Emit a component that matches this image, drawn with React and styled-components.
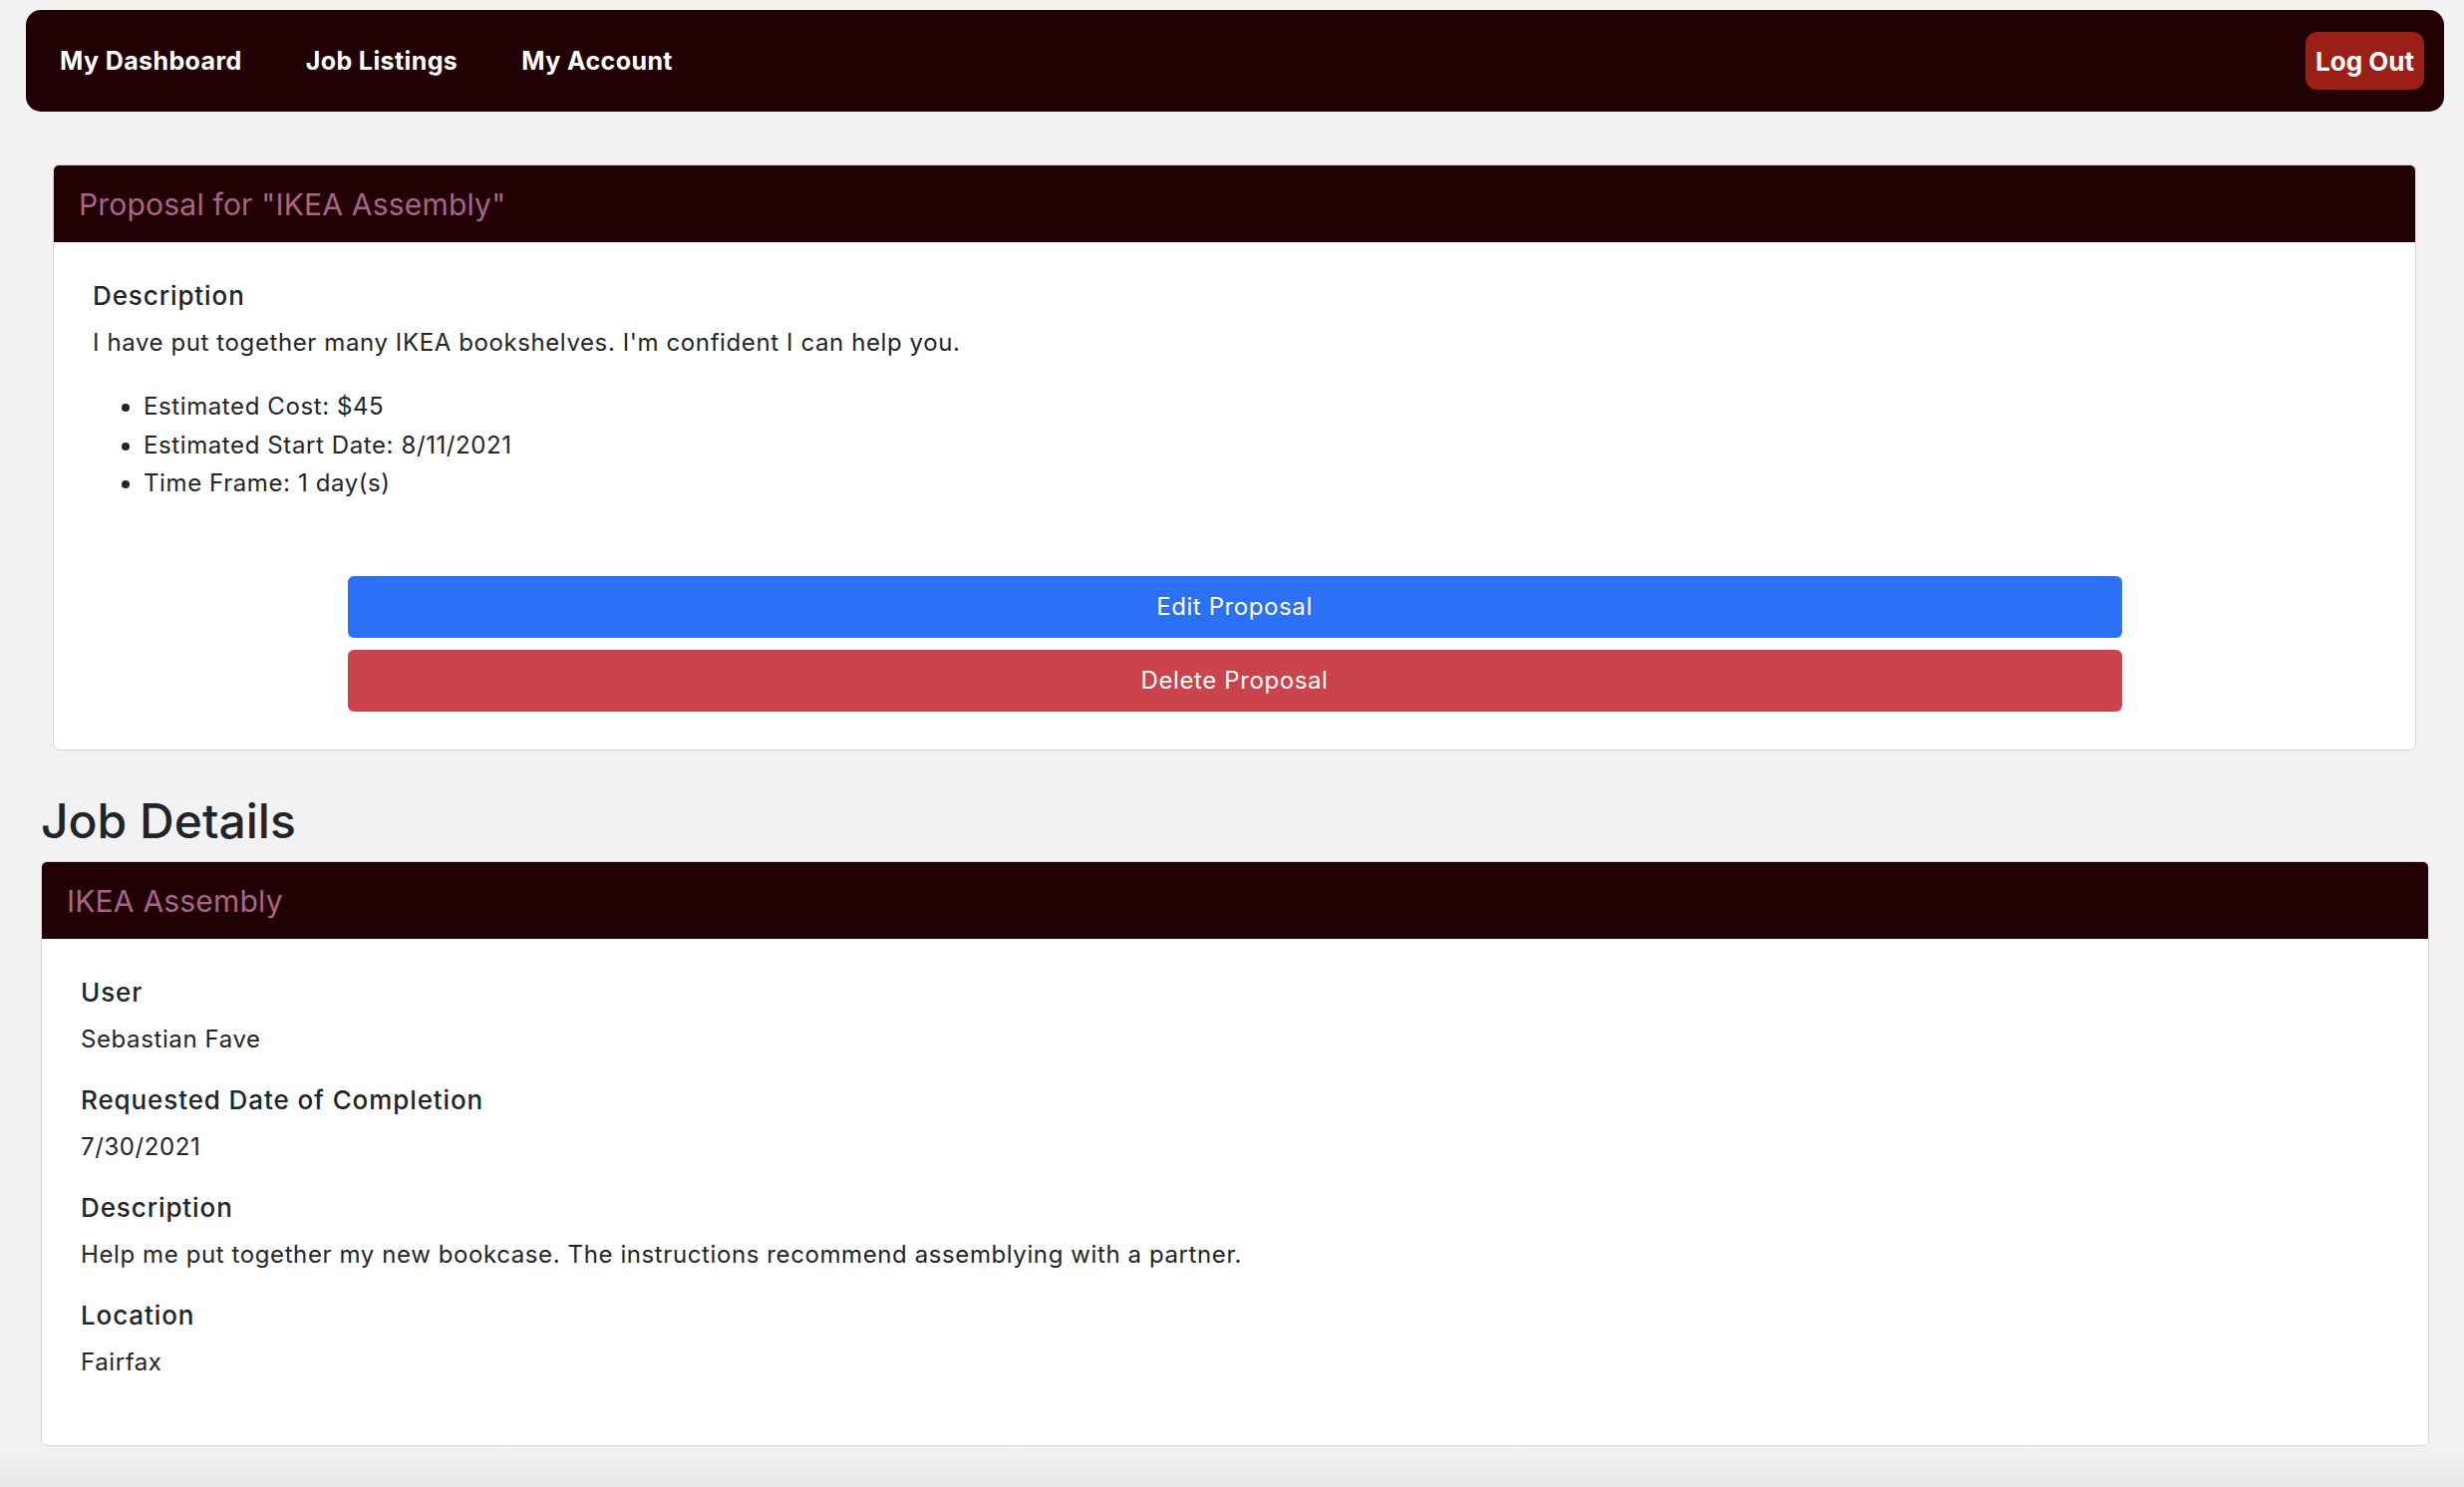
import styled, { createGlobalStyle } from "styled-components"

const GlobalStyle = createGlobalStyle`
html {
  height: 100%;
}
body {
  margin: 0;
  min-height: 100%;
  background: linear-gradient(to bottom, #f2f2f2 calc(100% - 40px), #e8e8e8);
  font-family: Inter, "Noto Sans", "Liberation Sans", sans-serif;
  color: #212529;
}
`

const Page = styled.div`
padding: 10px 20px 38px 26px;
`
const NavBar = styled.nav`
background-color: #210103;
height: 102px;
border-radius: 15px;
display: flex;
align-items: center;
justify-content: space-between;
padding: 0 20px 0 34px;
`
const NavLinks = styled.div`
display: flex;
gap: 64px;
`
const NavLink = styled.a`
color: #fff;
font-weight: 700;
font-size: 25px;
letter-spacing: 0.4px;
text-decoration: none;
cursor: pointer;
`
const LogOut = styled.button`
background-color: #9c1f17;
color: #fff;
border: none;
border-radius: 12px;
height: 58px;
padding: 0 10px;
font-family: inherit;
font-weight: 700;
font-size: 26px;
cursor: pointer;
`
const Main = styled.main`
margin: 53px 15px 0 15px;
`
const Card = styled.section`
background: #fff;
border: 1px solid #d6d6d6;
border-radius: 6px;
overflow: hidden;
margin: ${p => p.inset ? "0 13px 0 12px" : "0"};
`
const CardHeader = styled.div`
background-color: #210103;
height: 77px;
display: flex;
align-items: center;
padding: 0 25px;
font-size: 30px;
letter-spacing: 0.2px;
color: #a8648a;
`
const CardBody = styled.div`
padding: 38px 39px 38px 39px;
`
const Label = styled.h6`
margin: 0 0 13px 0;
font-size: 26px;
font-weight: 500;
letter-spacing: 0.9px;
line-height: 31px;
`
const Value = styled.p`
margin: 0 0 26px 0;
font-size: 24px;
letter-spacing: 0.6px;
line-height: 38px;
`
const List = styled.ul`
margin: 0;
padding-left: 51px;
font-size: 24px;
letter-spacing: 0.6px;
line-height: 38.5px;
`
const ButtonStack = styled.div`
width: 1780px;
margin: 73px auto 0 auto;
display: flex;
flex-direction: column;
gap: 12px;
`
const ActionButton = styled.button`
height: 62px;
border: none;
border-radius: 6px;
background-color: ${p => p.danger ? "#cc444b" : "#2c71f5"};
color: #fff;
font-family: inherit;
font-size: 24px;
letter-spacing: 0.6px;
cursor: pointer;
`
const Heading = styled.h2`
margin: 42px 0 12px 0;
font-size: 48px;
font-weight: 500;
line-height: 1.2;
`

function App() {
    const details = [
        ["User", "Sebastian Fave"],
        ["Requested Date of Completion", "7/30/2021"],
        ["Description", "Help me put together my new bookcase. The instructions recommend assemblying with a partner."],
        ["Location", "Fairfax"]
    ]
    return (
        <>
        <GlobalStyle />
        <Page>
            <NavBar>
                <NavLinks>
                    <NavLink>My Dashboard</NavLink>
                    <NavLink>Job Listings</NavLink>
                    <NavLink>My Account</NavLink>
                </NavLinks>
                <LogOut>Log Out</LogOut>
            </NavBar>
            <Main>
                <Card inset>
                    <CardHeader>Proposal for "IKEA Assembly"</CardHeader>
                    <CardBody>
                        <Label>Description</Label>
                        <Value>I have put together many IKEA bookshelves. I'm confident I can help you.</Value>
                        <List>
                            <li>Estimated Cost: $45</li>
                            <li>Estimated Start Date: 8/11/2021</li>
                            <li>Time Frame: 1 day(s)</li>
                        </List>
                        <ButtonStack>
                            <ActionButton>Edit Proposal</ActionButton>
                            <ActionButton danger>Delete Proposal</ActionButton>
                        </ButtonStack>
                    </CardBody>
                </Card>
                <Heading>Job Details</Heading>
                <Card>
                    <CardHeader>IKEA Assembly</CardHeader>
                    <CardBody>
                        {details.map(([label, value]) => (
                            <div key={label}>
                                <Label>{label}</Label>
                                <Value>{value}</Value>
                            </div>
                        ))}
                    </CardBody>
                </Card>
            </Main>
        </Page>
        </>
    )
}

export default App;
